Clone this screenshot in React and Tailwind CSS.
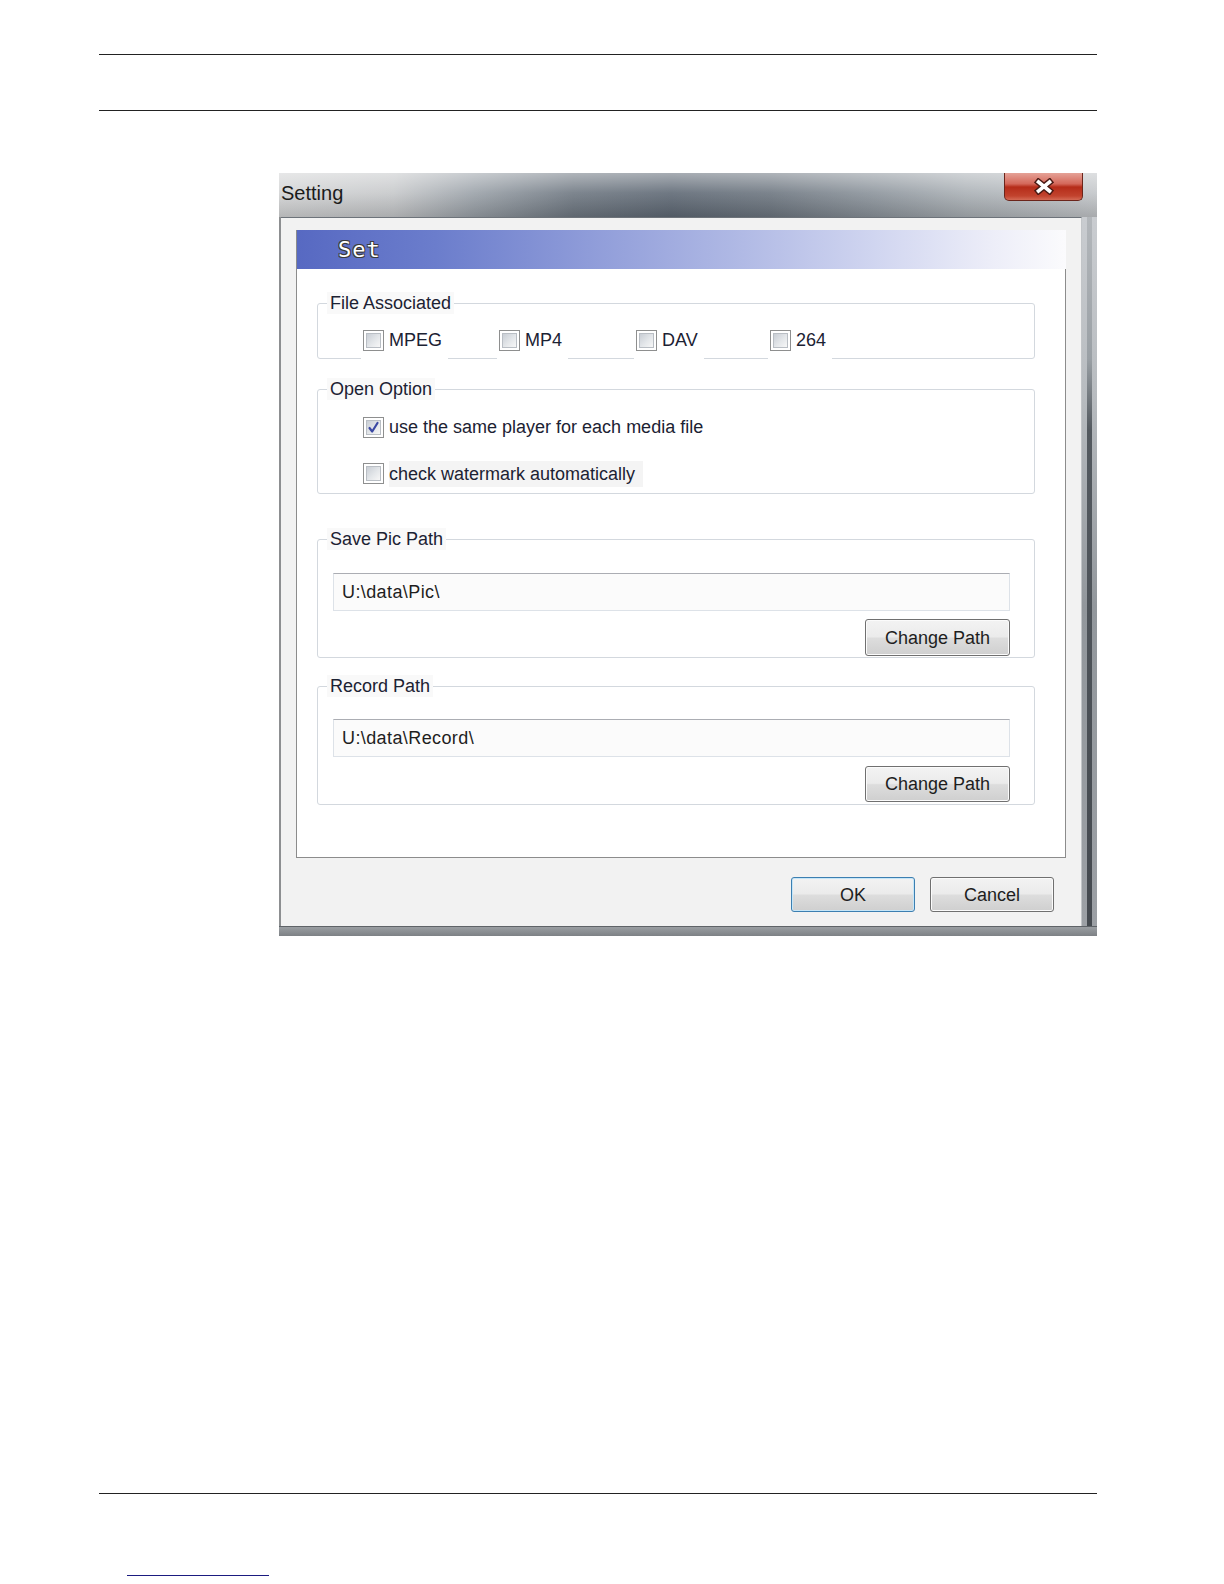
import React from "react";

const font = "font-['Liberation_Sans',Arial,sans-serif]";

const CheckBox = ({ checked }) => (
  <span className="w-[21px] h-[21px] shrink-0 border border-[#8e8f8f] bg-white p-[2px] flex">
    <span className="flex-1 flex items-center justify-center border border-[#b9bec4] bg-[linear-gradient(135deg,#c9ced5_0%,#e4e7ea_55%,#f7f7f7_100%)]">
      {checked && (
        <svg width="13" height="13" viewBox="0 0 13 13">
          <path d="M2.5 7 L5.2 10.5 L10.5 2" fill="none" stroke="#3a48a3" strokeWidth="2.2" strokeLinecap="round" strokeLinejoin="round" />
        </svg>
      )}
    </span>
  </span>
);

const Group = ({ label, className, children }) => (
  <div className={`relative border border-[#d3d8de] rounded-[3px] ${className}`}>
    <span className="absolute left-[9px] -top-[12px] bg-[#f9f9f9] px-[3px] text-[18px] leading-[22px] text-[#1c2233]">
      {label}
    </span>
    {children}
  </div>
);

const WinButton = ({ children, primary, className = "" }) => (
  <button
    className={`flex items-center justify-center rounded-[3px] border text-[18px] leading-none text-[#1e1e1e] bg-[linear-gradient(to_bottom,#f3f3f3_0%,#ebebeb_48%,#dddddd_52%,#cfcfcf_100%)] ${
      primary ? "border-[#3c7fb1] shadow-[inset_0_0_0_1px_#c6e6f8]" : "border-[#707070] shadow-[inset_0_0_0_1px_#fbfbfb]"
    } ${className}`}
  >
    {children}
  </button>
);

const PathBox = ({ value }) => (
  <div className="w-[677px] h-[38px] flex items-center pl-[8px] border border-[#dde2e8] border-t-[#abadb3] bg-[#fbfbfb] text-[18px] tracking-[0.4px] text-[#1e1e1e]">
    {value}
  </div>
);

export default function App() {
  return (
    <div className={`w-[1224px] h-[1584px] bg-white overflow-hidden ${font}`}>
      {/* page rules */}
      <div className="pt-[54px] ml-[99px] w-[998px]">
        <div className="h-px bg-[#222]" />
        <div className="h-[55px]" />
        <div className="h-px bg-[#222]" />
      </div>

      {/* dialog window */}
      <div className="ml-[279px] mt-[62px] w-[818px] h-[763px] flex flex-col bg-[#a9aeb3]">
        <div className="h-[44px] flex items-start bg-[linear-gradient(to_bottom,rgba(255,255,255,0.45)_0%,rgba(255,255,255,0.1)_45%,rgba(0,0,0,0.14)_100%),linear-gradient(to_right,#d3d4d5_0%,#c6c8ca_14%,#9aa1a8_24%,#6f7882_36%,#5f6975_48%,#6d7680_60%,#8a929a_72%,#aab0b5_84%,#c3c6c9_100%)]">
          <span className="pl-[2px] pt-[8px] text-[20px] leading-[24px] text-[#1b1b1b]">Setting</span>
          <div className="ml-auto mr-[14px] w-[79px] h-[28px] flex items-center justify-center rounded-b-[5px] border border-t-0 border-[#6b251b] bg-[linear-gradient(to_bottom,#e5a297_0%,#d4685a_40%,#b52c19_52%,#c2432e_85%,#d46a55_100%)]">
            <svg width="22" height="17" viewBox="0 0 22 17">
              <path d="M5.5 4 L16.5 13 M16.5 4 L5.5 13" stroke="#4a1a14" strokeWidth="6.5" strokeLinecap="square" />
              <path d="M5.5 4 L16.5 13 M16.5 4 L5.5 13" stroke="#ffffff" strokeWidth="3.6" strokeLinecap="square" />
            </svg>
          </div>
        </div>

        <div className="flex h-[709px]">
          <div className="w-[2px] bg-[#8d8f91]" />
          <div className="w-[801px] flex flex-col bg-[#f2f2f2] border-t border-t-[#6d737a] border-r border-r-[#c2c5c8]">
            {/* inner panel */}
            <div className="ml-[15px] mt-[12px] w-[770px] h-[628px] flex flex-col bg-white border-l border-b border-[#8c8c8c]">
              <div className="h-[39px] flex items-center pl-[41px] bg-[linear-gradient(to_right,#5769c2_0%,#6b7dcc_18%,#8f9cd9_38%,#b1bae5_58%,#d0d5f0_75%,#ecedf8_90%,#fbfbfd_100%)]">
                <span className="font-['DejaVu_Sans_Mono',monospace] text-[22px] leading-none tracking-[1px] text-white [text-shadow:1px_1px_0_#3a3a3a,-1px_-1px_0_#3a3a3a,1px_-1px_0_#3a3a3a,-1px_1px_0_#3a3a3a]">
                  Set
                </span>
              </div>

              <div className="flex-1 border-r border-[#8c8c8c] pl-[20px]">
                <Group label="File Associated" className="mt-[34px] w-[718px] h-[56px]">
                  <div className="flex pt-[17px] pl-[43px]">
                    {[
                      ["MPEG", "w-[136px]"],
                      ["MP4", "w-[137px]"],
                      ["DAV", "w-[134px]"],
                      ["264", "w-[134px]"],
                    ].map(([name, w]) => (
                      <div key={name} className={w}>
                        <div className="inline-flex items-center h-[38px] bg-white pl-[2px] pr-[6px] gap-[5px] text-[18px] text-[#1c2233]">
                          <CheckBox />
                          <span>{name}</span>
                        </div>
                      </div>
                    ))}
                  </div>
                </Group>

                <Group label="Open Option" className="mt-[30px] w-[718px] h-[105px]">
                  <div className="flex flex-col pt-[27px] pl-[45px] gap-[25px] text-[18px] text-[#1c2233]">
                    <div className="flex items-center gap-[5px] h-[21px]">
                      <CheckBox checked />
                      <span>use the same player for each media file</span>
                    </div>
                    <div className="flex items-center gap-[5px] h-[21px]">
                      <CheckBox />
                      <span className="bg-[#f4f4f4] pr-[8px] leading-[26px]">check watermark automatically</span>
                    </div>
                  </div>
                </Group>

                <Group label="Save Pic Path" className="mt-[45px] w-[718px] h-[119px]">
                  <div className="flex flex-col items-start pt-[33px] pl-[15px]">
                    <PathBox value={"U:\\data\\Pic\\"} />
                    <WinButton className="ml-[532px] mt-[8px] w-[145px] h-[37px]">Change Path</WinButton>
                  </div>
                </Group>

                <Group label="Record Path" className="mt-[28px] w-[718px] h-[119px]">
                  <div className="flex flex-col items-start pt-[32px] pl-[15px]">
                    <PathBox value={"U:\\data\\Record\\"} />
                    <WinButton className="ml-[532px] mt-[9px] w-[145px] h-[36px]">Change Path</WinButton>
                  </div>
                </Group>
              </div>
            </div>

            {/* footer buttons */}
            <div className="flex justify-end gap-[15px] pt-[19px] pr-[27px]">
              <WinButton primary className="w-[124px] h-[35px]">OK</WinButton>
              <WinButton className="w-[124px] h-[35px]">Cancel</WinButton>
            </div>
          </div>
          <div className="flex-1 flex bg-[linear-gradient(to_bottom,#c9ccd0_0%,#b8bcc0_25%,#92979c_55%,#9ca0a5_100%)]">
            <div className="ml-[5px] w-[5px] bg-[linear-gradient(to_bottom,#b3b7bb_0%,#9aa0a5_20%,#53595f_30%,#454a50_95%)]" />
          </div>
        </div>

        <div className="h-[10px] border-t border-[#5f6368] bg-[linear-gradient(to_bottom,#9a9ea2,#7d8185)]" />
      </div>

      {/* footer rule */}
      <div className="mt-[557px] ml-[99px] w-[998px] h-px bg-[#222]" />
      <div className="mt-[81px] ml-[127px] w-[142px] h-px bg-[#1b1b80]" />
    </div>
  );
}
